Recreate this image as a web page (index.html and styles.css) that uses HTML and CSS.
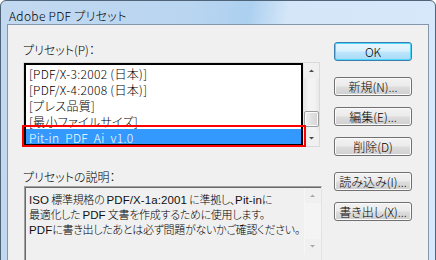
FILE: index.html
```html
<!DOCTYPE html>
<html lang="ja">
<head>
<meta charset="utf-8">
<title>Adobe PDF プリセット</title>
<link rel="stylesheet" href="styles.css">
</head>
<body>
<div class="window">
  <div class="titlebar">Adobe PDF プリセット</div>
  <div class="client">
    <div class="left">
      <div class="label">プリセット(P)：</div>
      <div class="listctl">
        <div class="list">
          <div class="item">[PDF/X-3:2002 (日本)]</div>
          <div class="item">[PDF/X-4:2008 (日本)]</div>
          <div class="item">[プレス品質]</div>
          <div class="item">[最小ファイルサイズ]</div>
          <div class="item sel">Pit-in&nbsp; PDF&nbsp; Ai&nbsp; v1.0</div>
        </div>
        <div class="vscroll">
          <svg class="arrow" width="15" height="15" viewBox="0 0 15 15"><path d="M5 9h5L7.5 6.5z" fill="#4a4a4a"/></svg>
          <div class="track"><div class="thumb thumb-list"></div></div>
          <svg class="arrow" width="15" height="15" viewBox="0 0 15 15"><path d="M5 6h5L7.5 8.5z" fill="#4a4a4a"/></svg>
        </div>
        <div class="highlight"></div>
      </div>
      <div class="label desc-label">プリセットの説明：</div>
      <div class="descbox">
        <div class="desctext">
          <div class="line"><span class="en">ISO</span> 標準規格の <span class="en">PDF/X-1a:2001</span> に準拠し、<span class="en">Pit-in</span>に</div>
          <div class="line">最適化した <span class="en">PDF</span> 文書を作成するために使用します。</div>
          <div class="line"><span class="en">PDF</span>に書き出したあとは必ず問題がないかご確認ください。</div>
        </div>
        <div class="vscroll vscroll-desc">
          <svg class="arrow" width="15" height="15" viewBox="0 0 15 15"><path d="M5 9h5L7.5 6.5z" fill="#a8a8a8"/></svg>
          <div class="track"></div>
          <svg class="arrow" width="15" height="15" viewBox="0 0 15 15"><path d="M5 6h5L7.5 8.5z" fill="#a8a8a8"/></svg>
        </div>
      </div>
    </div>
    <div class="buttons">
      <button class="btn default">OK</button>
      <button class="btn gap-big">新規(N)...</button>
      <button class="btn">編集(E)...</button>
      <button class="btn">削除(D)</button>
      <button class="btn gap-big">読み込み(I)...</button>
      <button class="btn">書き出し(X)...</button>
    </div>
  </div>
</div>
</body>
</html>
```
FILE: styles.css
```css
* { box-sizing: border-box; }
html, body { margin: 0; padding: 0; }
body {
  width: 436px;
  height: 260px;
  overflow: hidden;
  background: #ffffff;
  font-family: "Noto Sans CJK JP", "Liberation Sans", sans-serif;
  font-size: 12px;
  font-weight: 300;
  font-feature-settings: "palt";
  color: #000;
}
.window {
  width: 436px;
  height: 268px;
  border: 1px solid #4f6478;
  border-radius: 6px 6px 0 0;
  background: linear-gradient(100deg, #c3d9f0 0%, #b9d5f0 40%, #acd0f0 52%, #d4e6f8 60%, #d6e8f9 100%);
  display: flex;
  flex-direction: column;
}
.titlebar {
  height: 27px;
  padding: 8px 0 0 8px;
  line-height: 14px;
  font-size: 12px;
  color: #000;
  letter-spacing: 0.3px;
}
.client {
  flex: 1;
  margin: 0 6px;
  border: 1px solid #8297ad;
  background: #f0f0f0;
  display: flex;
}
.left {
  width: 314px;
  padding: 18px 0 0 15px;
  display: flex;
  flex-direction: column;
}
.label {
  height: 14px;
  line-height: 14px;
}
.listctl {
  position: relative;
  margin-top: 5px;
  width: 297px;
  height: 85px;
  border: 1px solid #dadada;
  display: flex;
}
.list {
  width: 279px;
  height: 83px;
  border: 2px solid #000;
  background: #fff;
  overflow: hidden;
}
.item {
  height: 16px;
  line-height: 17px;
  padding-left: 3px;
  white-space: nowrap;
  letter-spacing: 0.3px;
}
.item.sel {
  background: #3399ff;
  color: #fff;
}
.highlight {
  position: absolute;
  left: -2px;
  top: 62px;
  width: 284px;
  height: 22px;
  border: 2px solid #ff0000;
}
.vscroll {
  width: 16px;
  display: flex;
  flex-direction: column;
  background: #f0f0f0;
  border-left: 1px solid #e6e6e6;
}
.arrow { display: block; flex: none; }
.track {
  flex: 1;
  position: relative;
  background: linear-gradient(90deg, #e5e5e5, #f3f3f3 30%, #f3f3f3 70%, #e8e8e8);
}
.thumb {
  position: absolute;
  left: 0;
  right: 0;
  border: 1px solid #9b9b9b;
  border-radius: 2px;
  background: linear-gradient(90deg, #f2f2f2, #e0e0e0 50%, #d4d4d4);
  box-shadow: inset 0 0 0 1px #fafafa;
}
.thumb-list {
  top: 33px;
  height: 16px;
}
.desc-label {
  margin-top: 23px;
}
.descbox {
  margin-top: 2px;
  margin-left: 1px;
  width: 298px;
  height: 80px;
  border: 1px solid;
  border-color: #a0a0a0 #e3e3e3 #e3e3e3 #a0a0a0;
  box-shadow: inset 1px 1px 0 #696969;
  background: #f0f0f0;
  display: flex;
}
.desctext {
  flex: 1;
  padding: 5px 0 0 4px;
  font-size: 11px;
  letter-spacing: -0.3px;
  overflow: hidden;
}
.line {
  height: 15px;
  line-height: 15px;
  white-space: nowrap;
}
.desctext .en {
  font-family: "Liberation Sans", "Noto Sans CJK JP", sans-serif;
  font-size: 11.5px;
  letter-spacing: 0.1px;
  color: #111;
}
.vscroll-desc {
  width: 17px;
  height: 66px;
  margin-top: 1px;
  border-left: 1px solid #f6f6f6;
}
.vscroll-desc .track {
  background: #f4f4f4;
}
.buttons {
  padding: 17px 0 0 12px;
  display: flex;
  flex-direction: column;
}
.btn {
  width: 78px;
  height: 19px;
  margin: 11px 0 0 0;
  padding: 0;
  border: 1px solid #707070;
  border-radius: 3px;
  background: linear-gradient(#f2f2f2 0%, #ebebeb 48%, #dddddd 52%, #cfcfcf 100%);
  box-shadow: inset 0 0 0 1px #fbfbfb;
  font-family: "Noto Sans CJK JP", "Liberation Sans", sans-serif;
  font-size: 12px;
  font-weight: 300;
  font-feature-settings: "palt";
  line-height: 15px;
  color: #000;
}
.btn.default {
  margin-top: 0;
  border-color: #3c7fb1;
  box-shadow: inset 0 0 0 1px #48d8fb;
  background: linear-gradient(#eaf6fd 0%, #d9f0fc 48%, #bee6fd 52%, #a7d9f5 100%);
}
.btn.gap-big {
  margin-top: 16px;
}
```
